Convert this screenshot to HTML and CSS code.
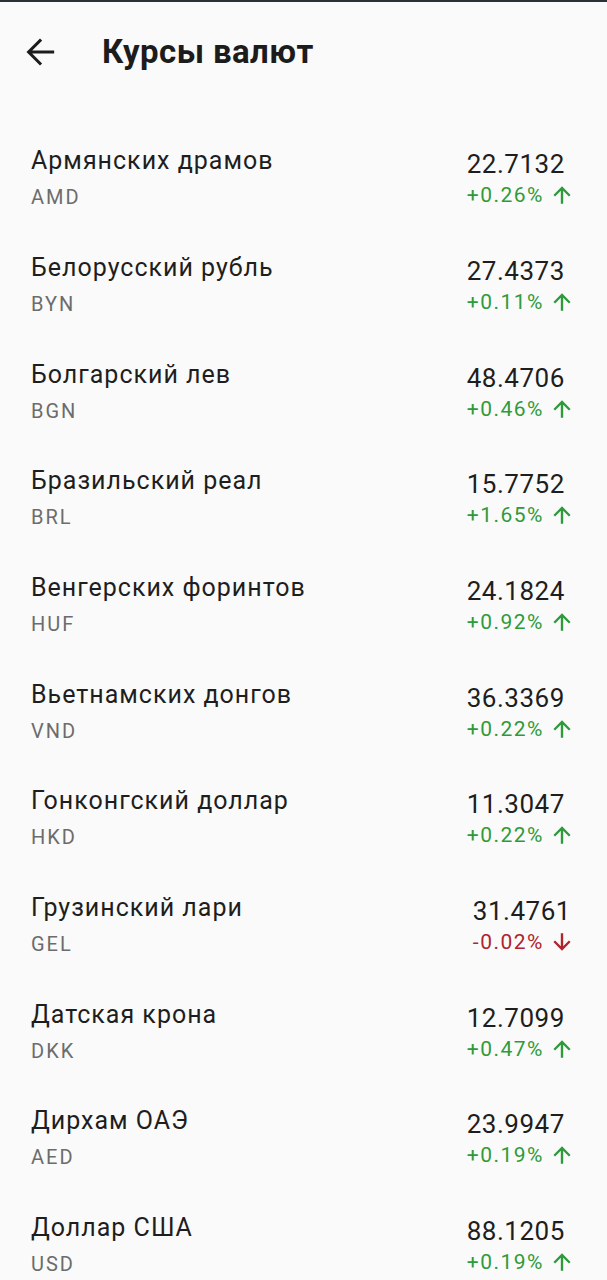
FILE: index.html
```html
<!DOCTYPE html>
<html lang="ru">
<head>
<meta charset="utf-8">
<title>Курсы валют</title>
<link rel="stylesheet" href="styles.css">
</head>
<body>
<div class="statusline"></div>
<header class="topbar">
  <svg class="back" viewBox="0 0 24 24" width="38" height="38" aria-hidden="true">
    <path d="M20 12H5.5M12 4.8L4.8 12l7.2 7.2" fill="none" stroke="#1c1c1c" stroke-width="1.9" stroke-linecap="square"/>
  </svg>
  <h1 class="title">Курсы валют</h1>
</header>
<main class="list">
  <div class="row">
    <div class="name-col"><div class="name">Армянских драмов</div><div class="code">AMD</div></div>
    <div class="rate-col"><div class="rate">22.7132</div><div class="change up">+0.26%<svg class="arr" viewBox="0 0 16 16"><path d="M8 15V2.5M1.8 8.6L8 2.4l6.2 6.2"/></svg></div></div>
  </div>
  <div class="row">
    <div class="name-col"><div class="name">Белорусский рубль</div><div class="code">BYN</div></div>
    <div class="rate-col"><div class="rate">27.4373</div><div class="change up">+0.11%<svg class="arr" viewBox="0 0 16 16"><path d="M8 15V2.5M1.8 8.6L8 2.4l6.2 6.2"/></svg></div></div>
  </div>
  <div class="row">
    <div class="name-col"><div class="name">Болгарский лев</div><div class="code">BGN</div></div>
    <div class="rate-col"><div class="rate">48.4706</div><div class="change up">+0.46%<svg class="arr" viewBox="0 0 16 16"><path d="M8 15V2.5M1.8 8.6L8 2.4l6.2 6.2"/></svg></div></div>
  </div>
  <div class="row">
    <div class="name-col"><div class="name">Бразильский реал</div><div class="code">BRL</div></div>
    <div class="rate-col"><div class="rate">15.7752</div><div class="change up">+1.65%<svg class="arr" viewBox="0 0 16 16"><path d="M8 15V2.5M1.8 8.6L8 2.4l6.2 6.2"/></svg></div></div>
  </div>
  <div class="row">
    <div class="name-col"><div class="name">Венгерских форинтов</div><div class="code">HUF</div></div>
    <div class="rate-col"><div class="rate">24.1824</div><div class="change up">+0.92%<svg class="arr" viewBox="0 0 16 16"><path d="M8 15V2.5M1.8 8.6L8 2.4l6.2 6.2"/></svg></div></div>
  </div>
  <div class="row">
    <div class="name-col"><div class="name">Вьетнамских донгов</div><div class="code">VND</div></div>
    <div class="rate-col"><div class="rate">36.3369</div><div class="change up">+0.22%<svg class="arr" viewBox="0 0 16 16"><path d="M8 15V2.5M1.8 8.6L8 2.4l6.2 6.2"/></svg></div></div>
  </div>
  <div class="row">
    <div class="name-col"><div class="name">Гонконгский доллар</div><div class="code">HKD</div></div>
    <div class="rate-col"><div class="rate">11.3047</div><div class="change up">+0.22%<svg class="arr" viewBox="0 0 16 16"><path d="M8 15V2.5M1.8 8.6L8 2.4l6.2 6.2"/></svg></div></div>
  </div>
  <div class="row">
    <div class="name-col"><div class="name">Грузинский лари</div><div class="code">GEL</div></div>
    <div class="rate-col"><div class="rate">31.4761</div><div class="change down">-0.02%<svg class="arr" viewBox="0 0 16 16"><path d="M8 1V13.5M1.8 7.4L8 13.6l6.2-6.2"/></svg></div></div>
  </div>
  <div class="row">
    <div class="name-col"><div class="name">Датская крона</div><div class="code">DKK</div></div>
    <div class="rate-col"><div class="rate">12.7099</div><div class="change up">+0.47%<svg class="arr" viewBox="0 0 16 16"><path d="M8 15V2.5M1.8 8.6L8 2.4l6.2 6.2"/></svg></div></div>
  </div>
  <div class="row">
    <div class="name-col"><div class="name">Дирхам ОАЭ</div><div class="code">AED</div></div>
    <div class="rate-col"><div class="rate">23.9947</div><div class="change up">+0.19%<svg class="arr" viewBox="0 0 16 16"><path d="M8 15V2.5M1.8 8.6L8 2.4l6.2 6.2"/></svg></div></div>
  </div>
  <div class="row">
    <div class="name-col"><div class="name">Доллар США</div><div class="code">USD</div></div>
    <div class="rate-col"><div class="rate">88.1205</div><div class="change up">+0.19%<svg class="arr" viewBox="0 0 16 16"><path d="M8 15V2.5M1.8 8.6L8 2.4l6.2 6.2"/></svg></div></div>
  </div>
</main>
</body>
</html>
```

FILE: styles.css
```css
html, body {
  margin: 0;
  padding: 0;
  background: #fafafa;
}
body {
  font-family: Roboto, "Noto Sans", "DejaVu Sans", sans-serif;
  color: #1e1e1e;
  overflow: hidden;
}
.statusline {
  height: 2px;
  background: #2b2f36;
}
.topbar {
  height: 123px;
  display: flex;
  align-items: flex-start;
  padding-left: 21px;
  box-sizing: border-box;
  padding-top: 31px;
}
.back {
  flex: none;
  display: block;
}
.title {
  margin: 0 0 0 43px;
  font-size: 33px;
  font-weight: 700;
  line-height: 38px;
  letter-spacing: 0.4px;
  color: #1c1c1c;
}
.list {
  display: flex;
  flex-direction: column;
}
.row {
  height: 106.67px;
  display: flex;
  align-items: center;
  justify-content: space-between;
  padding: 0 35px 0 31px;
}
.name-col {
  display: flex;
  flex-direction: column;
}
.name {
  font-size: 25px;
  line-height: 28px;
  letter-spacing: 1px;
  color: #1e1e1e;
}
.code {
  font-size: 20px;
  line-height: 23px;
  letter-spacing: 2px;
  margin-top: 11px;
  color: #6c6c6c;
}
.rate-col {
  display: flex;
  flex-direction: column;
  align-items: flex-start;
}
.rate {
  font-size: 26px;
  line-height: 30px;
  letter-spacing: 0.5px;
  color: #1e1e1e;
}
.change {
  display: flex;
  align-items: center;
  font-size: 21px;
  line-height: 24px;
  letter-spacing: 1.5px;
  margin-top: 4px;
}
.change.up { color: #2f9a3a; }
.change.down { color: #b0242c; }
.arr {
  width: 20px;
  height: 20px;
  margin-left: 8px;
  fill: none;
  stroke: currentColor;
  stroke-width: 1.9;
}
```
